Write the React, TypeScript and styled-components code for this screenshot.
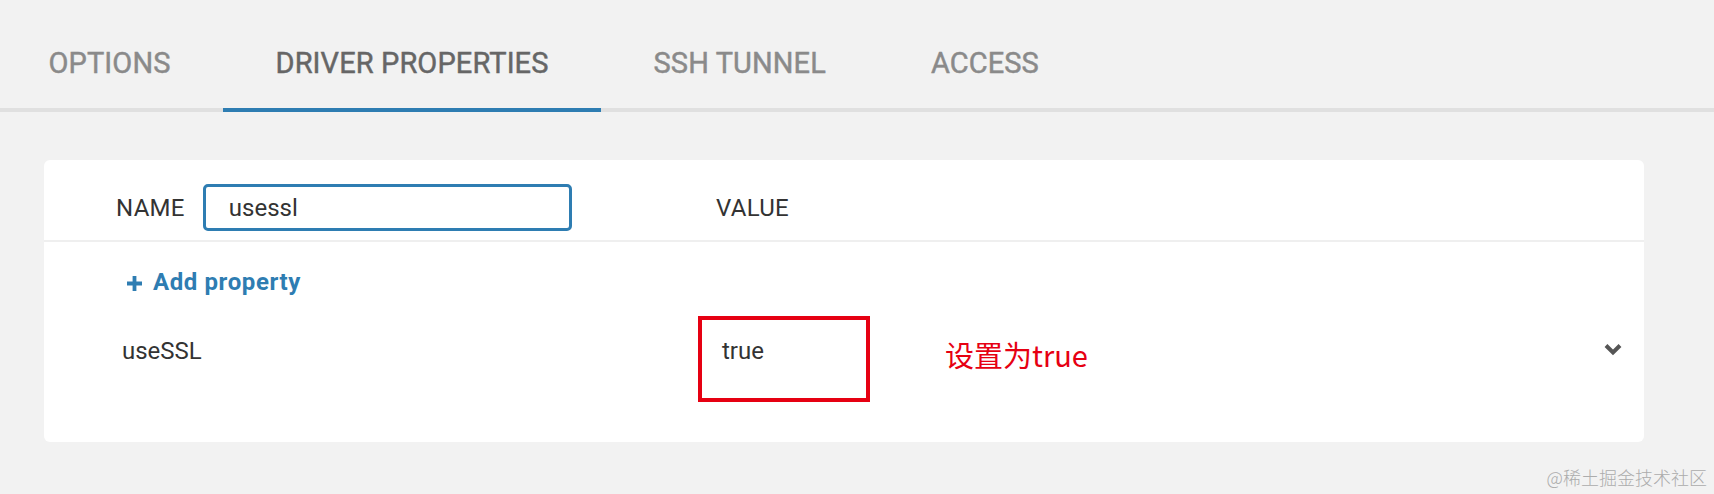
import React from "react";
import styled, { createGlobalStyle } from "styled-components";

const GlobalStyle = createGlobalStyle`
  html, body {
    margin: 0;
    padding: 0;
    background: #f2f2f2;
  }
  body {
    font-family: Roboto, "Noto Sans", "Noto Sans CJK SC", sans-serif;
    color: #333;
  }
  * { box-sizing: border-box; }
`;

const Page = styled.div`
  position: relative;
  min-height: 494px;
  background: #f2f2f2;
  overflow: hidden;
`;

const TabBar = styled.div`
  display: flex;
  border-bottom: 4px solid #e0e0e0;
`;

const TabList = styled.div`
  display: flex;
  margin-left: -4px;
`;

const Tab = styled.div<{ $active?: boolean }>`
  height: 112px;
  padding: 19px 52.5px 0;
  margin-bottom: -4px;
  display: flex;
  align-items: center;
  font-family: Roboto, sans-serif;
  font-size: 29px;
  font-weight: 400;
  line-height: 1;
  letter-spacing: 0.1px;
  color: ${(p) => (p.$active ? "#666666" : "#8a8a8a")};
  -webkit-text-stroke: 0.45px ${(p) => (p.$active ? "#666666" : "#8a8a8a")};
  border-bottom: 4px solid ${(p) => (p.$active ? "#2e7db2" : "transparent")};
  white-space: nowrap;
`;

const Content = styled.div`
  padding: 48px 70px 0 44px;
`;

const Card = styled.div`
  background: #ffffff;
  border-radius: 6px;
`;

const HeaderRow = styled.div`
  display: grid;
  grid-template-columns: 600px 1fr;
  align-items: center;
  padding: 24px 0 9px 72px;
  border-bottom: 2px solid #efefef;
`;

const NameCell = styled.div`
  display: flex;
  align-items: center;
  gap: 18px;
`;

const HeadLabel = styled.span`
  font-size: 24px;
  line-height: 28px;
  letter-spacing: 0.3px;
  color: #333;
`;

const FilterInput = styled.input`
  width: 369px;
  height: 47px;
  border: 3px solid #2e7db2;
  border-radius: 5px;
  padding: 0 0 0 23px;
  font-family: Roboto, sans-serif;
  font-size: 24px;
  color: #333;
  background: #fff;
  outline: none;
`;

const Body = styled.div`
  padding: 26px 22px 40px 0;
`;

const AddButton = styled.button`
  display: flex;
  align-items: center;
  gap: 10px;
  margin-left: 82px;
  padding: 0;
  border: none;
  background: none;
  font-family: Roboto, sans-serif;
  font-size: 24px;
  font-weight: 700;
  line-height: 28px;
  letter-spacing: 0.6px;
  color: #2e7db2;
  cursor: pointer;
`;

const PlusIcon = styled.svg`
  width: 17px;
  height: 17px;
  margin-top: 2px;
`;

const PropRow = styled.div`
  display: grid;
  grid-template-columns: 576px 172px 75px 1fr auto;
  align-items: start;
  margin-top: 20px;
  padding-left: 78px;
`;

const PropName = styled.div`
  font-size: 24px;
  line-height: 28px;
  padding-top: 21px;
  color: #333;
`;

const ValueBox = styled.div`
  height: 86px;
  border: 4px solid #e60012;
  padding: 17px 0 0 20px;
  font-size: 24px;
  line-height: 28px;
  color: #333;
`;

const Annotation = styled.div`
  grid-column: 4;
  padding-top: 18px;
  font-family: "Noto Sans CJK SC", sans-serif;
  font-size: 29px;
  line-height: 40px;
  color: #e60012;
  white-space: nowrap;
`;

const ChevronIcon = styled.svg`
  margin-top: 27px;
  width: 18px;
  height: 13px;
`;

const Watermark = styled.div`
  position: absolute;
  right: 7px;
  bottom: 5px;
  font-family: "Noto Sans CJK SC", sans-serif;
  font-weight: 300;
  font-size: 18px;
  line-height: 24px;
  color: #acacac;
  white-space: nowrap;
`;

const tabs = ["OPTIONS", "DRIVER PROPERTIES", "SSH TUNNEL", "ACCESS"];

export default function App() {
  return (
    <Page>
      <GlobalStyle />
      <TabBar>
        <TabList>
          {tabs.map((t) => (
            <Tab key={t} $active={t === "DRIVER PROPERTIES"}>
              {t}
            </Tab>
          ))}
        </TabList>
      </TabBar>
      <Content>
        <Card>
          <HeaderRow>
            <NameCell>
              <HeadLabel>NAME</HeadLabel>
              <FilterInput defaultValue="usessl" />
            </NameCell>
            <HeadLabel>VALUE</HeadLabel>
          </HeaderRow>
          <Body>
            <AddButton>
              <PlusIcon viewBox="0 0 17 17">
                <path d="M8.5 1 V16 M1 8.5 H16" stroke="#2e7db2" strokeWidth="3.8" />
              </PlusIcon>
              Add property
            </AddButton>
            <PropRow>
              <PropName>useSSL</PropName>
              <ValueBox>true</ValueBox>
              <Annotation>设置为true</Annotation>
              <ChevronIcon viewBox="0 0 18 13">
                <polyline
                  points="2,2.5 9,9.5 16,2.5"
                  fill="none"
                  stroke="#555"
                  strokeWidth="4"
                  strokeLinejoin="miter"
                />
              </ChevronIcon>
            </PropRow>
          </Body>
        </Card>
      </Content>
      <Watermark>@稀土掘金技术社区</Watermark>
    </Page>
  );
}
